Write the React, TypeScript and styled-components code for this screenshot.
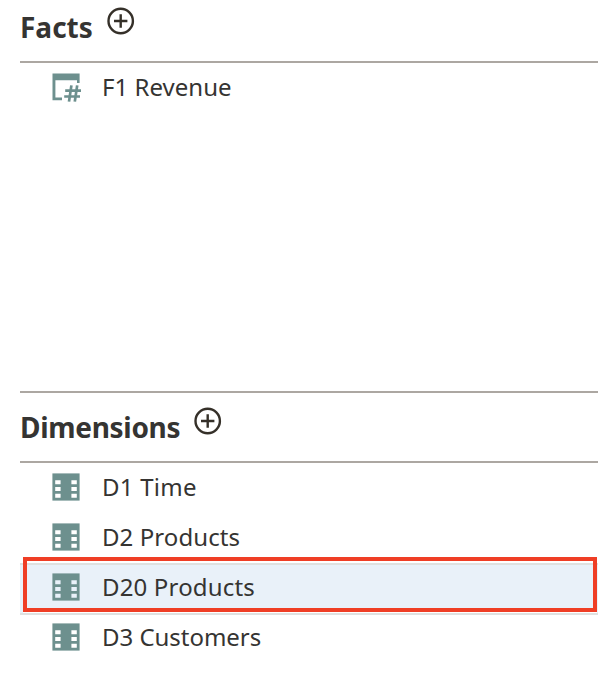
import React from "react";
import styled, { createGlobalStyle } from "styled-components";

const GlobalStyle = createGlobalStyle`
  body {
    margin: 0;
    background: #fff;
    color: #353432;
    font-family: "Noto Sans", sans-serif;
  }
`;

const Panel = styled.main`
  box-sizing: border-box;
  height: 690px;
  padding: 0 16px 0 20px;
  overflow: hidden;
`;

const SectionHeader = styled.header<{ $height: number; $ruled?: boolean }>`
  box-sizing: border-box;
  display: flex;
  align-items: flex-end;
  gap: 14px;
  height: ${(p) => p.$height}px;
  padding-bottom: 15px;
  border-top: ${(p) => (p.$ruled ? "2px solid #aca7a2" : "none")};
  border-bottom: 2px solid #aca7a2;
`;

const Title = styled.h2<{ $tracking: number }>`
  margin: 0;
  padding-bottom: 1px;
  font-size: 28px;
  line-height: 36px;
  font-weight: 700;
  letter-spacing: ${(p) => p.$tracking}px;
  white-space: nowrap;
`;

const AddButton = styled.button`
  display: flex;
  padding: 0;
  margin-bottom: 11px;
  border: 0;
  background: none;
  color: #353029;
`;

const List = styled.ul<{ $height: number }>`
  list-style: none;
  margin: 0;
  padding: 0;
  height: ${(p) => p.$height}px;
`;

const Row = styled.li<{ $selected?: boolean }>`
  position: relative;
  box-sizing: border-box;
  display: flex;
  align-items: center;
  gap: 20px;
  height: ${(p) => (p.$selected ? 52 : 50)}px;
  margin-bottom: ${(p) => (p.$selected ? -2 : 0)}px;
  padding: 0 0 ${(p) => (p.$selected ? 4 : 2)}px 30px;
  border: 0 solid #dfe1e0;
  border-width: ${(p) => (p.$selected ? "2px 0" : "0")};
  background: ${(p) => (p.$selected ? "#e9f1f9" : "transparent")};
`;

const Highlight = styled.span`
  position: absolute;
  box-sizing: border-box;
  inset: -8px 1px 1px 3px;
  border: 4px solid #ef3e25;
  box-shadow: 0 1px 0 #fff;
`;

const Label = styled.span<{ $tracking: number }>`
  font-size: 24px;
  line-height: 34px;
  letter-spacing: ${(p) => p.$tracking}px;
  white-space: nowrap;
`;

const PlusIcon = () => (
  <svg width="28" height="28" viewBox="0 0 28 28" fill="none" stroke="currentColor" strokeWidth="2.4">
    <circle cx="13.7" cy="14" r="12.2" />
    <path d="M13.7 7.3V20.7M7 14H20.4" />
  </svg>
);

const FactIcon = () => (
  <svg width="32" height="32" viewBox="0 0 32 32" fill="#6d908e">
    <path d="M2.5 2.4H29.6V12H27V9.3H5.4V26.6H12V29.2H2.5Z" />
    <path d="M21.4 14.4L19 30.6M27.2 14.4L24.8 30.6M15.2 19.6H31M14.2 25.5H30" fill="none" stroke="#6d908e" strokeWidth="2.7" />
  </svg>
);

const DimensionIcon = ({ hole }: { hole: string }) => (
  <svg width="32" height="32" viewBox="0 0 32 32">
    <path d="M2.4 2.4H29.6V29.6H2.4Z" fill="#6d908e" />
    <path
      d="M5.2 9.2h5.4v4H5.2zM5.2 16h5.4v4H5.2zM5.2 22.7h5.4v4H5.2zM21.4 9.2h5.4v4h-5.4zM21.4 16h5.4v4h-5.4zM21.4 22.7h5.4v4h-5.4z"
      fill={hole}
    />
  </svg>
);

const dimensions = [
  { name: "D1 Time", tracking: 0.25 },
  { name: "D2 Products", tracking: 0.08 },
  { name: "D20 Products", tracking: 0.16, selected: true },
  { name: "D3 Customers", tracking: -0.03 },
];

export default function App() {
  return (
    <Panel>
      <GlobalStyle />
      <SectionHeader $height={63}>
        <Title $tracking={0}>Facts</Title>
        <AddButton aria-label="Add fact"><PlusIcon /></AddButton>
      </SectionHeader>
      <List $height={328}>
        <Row>
          <FactIcon />
          <Label $tracking={0.03}>F1 Revenue</Label>
        </Row>
      </List>
      <SectionHeader $height={72} $ruled>
        <Title $tracking={-0.3}>Dimensions</Title>
        <AddButton aria-label="Add dimension"><PlusIcon /></AddButton>
      </SectionHeader>
      <List $height={227}>
        {dimensions.map((d) => (
          <Row key={d.name} $selected={d.selected}>
            <DimensionIcon hole={d.selected ? "#e9f1f9" : "#fff"} />
            <Label $tracking={d.tracking}>{d.name}</Label>
            {d.selected && <Highlight />}
          </Row>
        ))}
      </List>
    </Panel>
  );
}
